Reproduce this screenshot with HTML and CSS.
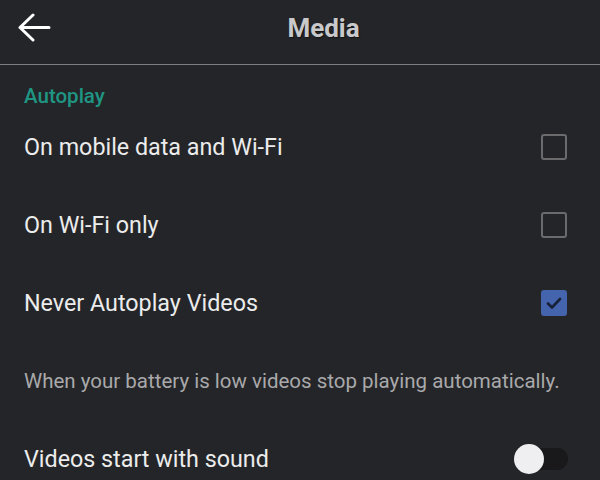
FILE: index.html
```html
<!DOCTYPE html>
<html lang="en">
<head>
    <meta charset="UTF-8">
    <meta name="viewport" content="width=device-width, initial-scale=1.0">
    <title>Media</title>
    <link rel="stylesheet" href="styles.css">
</head>
<body>

    <!-- TOP BAR -->
    <div class="top-bar">
        <svg class="back-icon" width="33" height="29" viewBox="0 0 33 29">
            <path d="M2 14.5H31M15 2L2 14.5L15 27" fill="none" stroke="#ffffff" stroke-width="3" stroke-linecap="round" stroke-linejoin="round"/>
        </svg>
        <div class="page-title">Media</div>
    </div>

    <!-- AUTOPLAY SECTION -->
    <div class="section-label">Autoplay</div>

    <div class="setting-row">
        <span>On mobile data and Wi-Fi</span>
        <span class="checkbox"></span>
    </div>
    <div class="setting-row">
        <span>On Wi-Fi only</span>
        <span class="checkbox"></span>
    </div>
    <div class="setting-row">
        <span>Never Autoplay Videos</span>
        <span class="checkbox checked">
            <svg width="18" height="18" viewBox="0 0 18 18">
                <path d="M3 9.5L7 13.5L15 5" fill="none" stroke="#18213a" stroke-width="2.6" stroke-linecap="round" stroke-linejoin="round"/>
            </svg>
        </span>
    </div>

    <div class="setting-note">When your battery is low videos stop playing automatically.</div>

    <div class="setting-row">
        <span>Videos start with sound</span>
        <span class="switch"><span class="switch-knob"></span></span>
    </div>

</body>
</html>
```

FILE: styles.css
```css
body {
    font-family: Roboto, "Noto Sans", sans-serif;
    margin: 0;
    background-color: #242528;
    color: #ececec;
    width: 600px;
    height: 480px;
    overflow: hidden;
}
.top-bar {
    height: 55px;
    padding-bottom: 9px;
    display: flex;
    align-items: center;
    border-bottom: 1px solid #7e7e80;
}
.back-icon {
    margin-left: 18px;
    flex-shrink: 0;
}
.page-title {
    flex: 1;
    text-align: center;
    padding-right: 4px;
    font-size: 26px;
    font-weight: 700;
    color: #c9c9cb;
    text-shadow: 1px 1px 1px rgba(0, 0, 0, 0.5);
}
.section-label {
    padding: 20px 24px 1px;
    font-size: 20.5px;
    font-weight: 500;
    line-height: 22px;
    color: #1f9683;
}
.setting-row {
    height: 78px;
    padding: 0 33px 0 24px;
    display: flex;
    align-items: center;
    justify-content: space-between;
    font-size: 23.3px;
}
.checkbox {
    width: 22px;
    height: 22px;
    border: 2px solid #6b6b6e;
    border-radius: 3px;
    display: flex;
    align-items: center;
    justify-content: center;
}
.checkbox.checked {
    background-color: #4464ad;
    border-color: #4464ad;
}
.setting-note {
    padding: 27px 24px;
    font-size: 20.5px;
    line-height: 24px;
    color: #a9a9ab;
}
.switch {
    position: relative;
    width: 48px;
    height: 22px;
    border-radius: 11px;
    background-color: #19191b;
    margin-right: -1px;
}
.switch-knob {
    position: absolute;
    left: -6px;
    top: -4px;
    width: 30px;
    height: 30px;
    border-radius: 50%;
    background-color: #efeff1;
}
```
